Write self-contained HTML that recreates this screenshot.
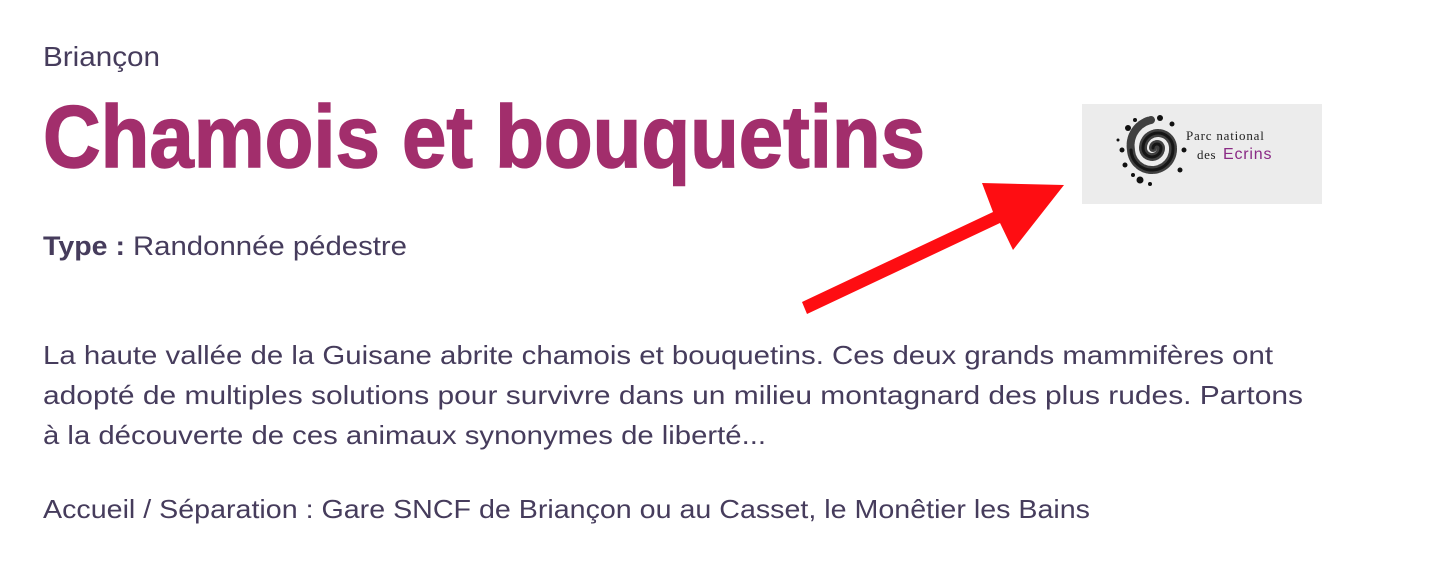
<!DOCTYPE html>
<html><head><meta charset="utf-8"><style>
html,body{margin:0;padding:0;background:#fff;width:1440px;height:570px;overflow:hidden}
svg{display:block}
</style></head><body>
<svg width="1440" height="570" viewBox="0 0 1440 570" xmlns="http://www.w3.org/2000/svg">
<g font-family="Liberation Sans, sans-serif" fill="#463c5c">
<text x="43" y="66" font-size="28" textLength="117" lengthAdjust="spacingAndGlyphs">Briançon</text>
<text x="43" y="167" font-size="88" font-weight="bold" fill="#a22e6c" stroke="#a22e6c" stroke-width="1.5" textLength="882" lengthAdjust="spacingAndGlyphs">Chamois et bouquetins</text>
<text x="43" y="255" font-size="27" font-weight="bold" textLength="82" lengthAdjust="spacingAndGlyphs">Type :</text>
<text x="133" y="255" font-size="27" textLength="274" lengthAdjust="spacingAndGlyphs">Randonnée pédestre</text>
<text x="43" y="364" font-size="26" textLength="1230" lengthAdjust="spacingAndGlyphs">La haute vallée de la Guisane abrite chamois et bouquetins. Ces deux grands mammifères ont</text>
<text x="43" y="404" font-size="26" textLength="1260" lengthAdjust="spacingAndGlyphs">adopté de multiples solutions pour survivre dans un milieu montagnard des plus rudes. Partons</text>
<text x="43" y="444" font-size="26" textLength="723" lengthAdjust="spacingAndGlyphs">à la découverte de ces animaux synonymes de liberté...</text>
<text x="43" y="518" font-size="26" textLength="1047" lengthAdjust="spacingAndGlyphs">Accueil / Séparation : Gare SNCF de Briançon ou au Casset, le Monêtier les Bains</text>
</g>
<rect x="1082" y="104" width="240" height="100" fill="#ececec"/>
<g fill="none" stroke="#151515" stroke-linecap="round">
<path d="M1157 148 m-4 0 a4 4 0 1 1 8 0 a9 9 0 1 1 -18 0 a15 15 0 1 1 30 0 a21 21 0 1 1 -42 2 a26 26 0 0 1 20 -30" stroke-width="8" stroke-dasharray="4 1.5" opacity="0.8"/>
<path d="M1157 148 m-4 0 a4 4 0 1 1 8 0 a9 9 0 1 1 -18 0 a15 15 0 1 1 30 0 a21 21 0 1 1 -42 2" stroke-width="3"/>
</g>
<g fill="#111">
<circle cx="1128" cy="128" r="3"/><circle cx="1122" cy="150" r="2.5"/><circle cx="1140" cy="180" r="3.5"/><circle cx="1160" cy="118" r="3"/><circle cx="1184" cy="150" r="2.5"/><circle cx="1180" cy="170" r="2.5"/><circle cx="1135" cy="120" r="2"/><circle cx="1125" cy="165" r="2.5"/><circle cx="1150" cy="184" r="2"/><circle cx="1172" cy="124" r="2.5"/><circle cx="1118" cy="140" r="1.5"/><circle cx="1133" cy="175" r="2"/>
</g>
<text x="1186" y="140" font-family="Liberation Serif, serif" font-size="13" fill="#222" letter-spacing="0.8">Parc national</text>
<text x="1197" y="159" font-family="Liberation Serif, serif" font-size="13" fill="#222" letter-spacing="0.6">des</text>
<text x="1223" y="159" font-family="Liberation Sans, sans-serif" font-size="16" fill="#8a2a85" letter-spacing="0.8">Ecrins</text>
<polygon points="802,302 993,212 982,183 1064,185 1013,250 1000,223 807,314" fill="#fe0d12"/>
</svg>
</body></html>
